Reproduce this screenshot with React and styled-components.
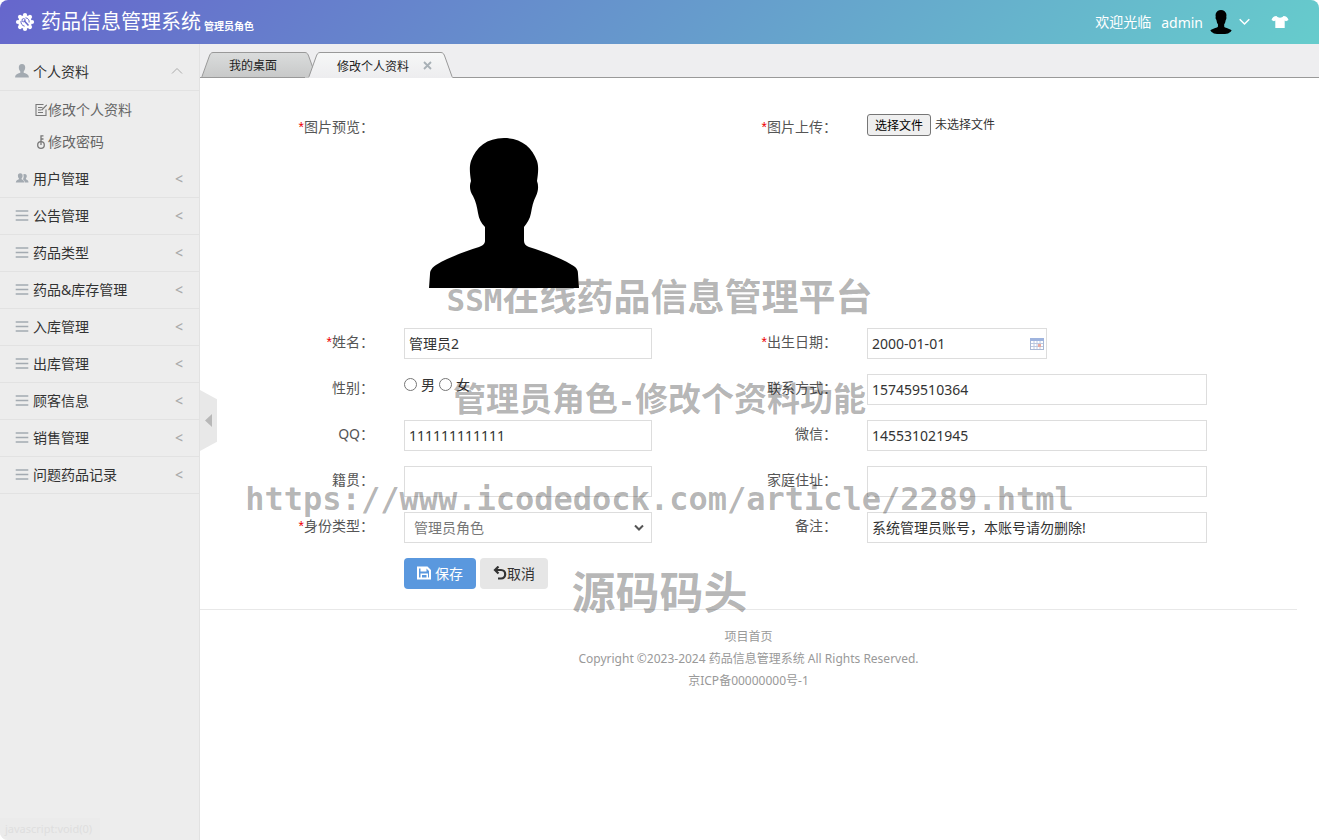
import { useRef, useState } from "react"
import styled, { createGlobalStyle } from "styled-components"

const GlobalStyle = createGlobalStyle`
    * {
        box-sizing: border-box;
    }
    body {
        margin: 0;
        background: #fff;
        color: #333;
        font-family: "Noto Sans", "Noto Sans CJK SC", sans-serif;
        font-size: 14px;
        line-height: 20px;
    }
    button, input, select {
        font-family: inherit;
    }
    a {
        color: inherit;
        text-decoration: none;
    }
    `
const Page = styled.div`
    position: relative;
    display: flex;
    flex-direction: column;
    min-height: 100vh;
    border-radius: 8px;
    overflow: hidden;
    `
const TopBar = styled.header`
    display: flex;
    align-items: center;
    justify-content: space-between;
    height: 44px;
    padding: 0 30px 0 15px;
    color: #fff;
    background: linear-gradient(135deg, #66c, #6cc);
    `
const Brand = styled.a`
    display: flex;
    align-items: center;
    `
const Title = styled.span`
    margin: 0 3px 0 6px;
    font-size: 20px;
    line-height: 28px;
    `
const Role = styled.span`
    padding-top: 8px;
    font-size: 10px;
    font-weight: 700;
    line-height: 14px;
    `
const UserArea = styled.div`
    display: flex;
    align-items: center;
    `
const Welcome = styled.span`
    margin-right: 10px;
    `
const UserButton = styled.button`
    display: flex;
    align-items: center;
    gap: 6px;
    padding: 0;
    border: none;
    background: none;
    color: inherit;
    font-size: 14px;
    cursor: pointer;
    `
const SkinButton = styled.button`
    display: flex;
    margin-left: 21px;
    padding: 0;
    border: none;
    background: none;
    color: inherit;
    cursor: pointer;
    `
const AvatarImage = styled.svg`
    display: block;
    width: ${props => props.$size}px;
    height: ${props => props.$size}px;
    border-radius: ${props => props.$round ? "8px" : "0"};
    `
const Body = styled.div`
    display: flex;
    flex: 1;
    `
const Sidebar = styled.nav`
    position: relative;
    flex: 0 0 200px;
    padding-top: 10px;
    border-right: 1px solid #e2e2e2;
    background: #ededed;
    `
const MenuItem = styled.button`
    display: flex;
    align-items: center;
    gap: 4px;
    width: 100%;
    height: 37px;
    padding: 0 16px 2px 15px;
    border: none;
    border-bottom: 1px solid #e2e2e2;
    background: none;
    color: #333;
    font-size: 14px;
    text-align: left;
    cursor: pointer;
    `
const MenuText = styled.span`
    flex: 1;
    `
const MenuArrow = styled.span`
    color: #aaa;
    font-weight: 500;
    `
const SubMenu = styled.div`
    padding: 3px 0;
    `
const SubItem = styled.a`
    display: flex;
    align-items: center;
    height: 32px;
    padding-left: 35px;
    color: #666;
    `
const Collapse = styled.button`
    position: absolute;
    top: 346px;
    left: 200px;
    display: flex;
    align-items: center;
    width: 17px;
    height: 61px;
    padding: 0 0 0 5px;
    border: none;
    background: #e8e8e8;
    clip-path: polygon(0 0, 100% 15%, 100% 85%, 0 100%);
    cursor: pointer;
    `
const StatusText = styled.div`
    position: absolute;
    left: 0;
    bottom: 0;
    width: 100px;
    padding: 0 5px;
    background: #ebebeb;
    color: #dedede;
    font-size: 11px;
    line-height: 22px;
    white-space: nowrap;
    `
const Main = styled.main`
    flex: 1;
    min-width: 0;
    background: #fff;
    `
const TabBar = styled.div`
    display: flex;
    align-items: flex-end;
    height: 34px;
    background: #eeeef0;
    box-shadow: inset 0 -1px 0 #999;
    `
const Tab = styled.div`
    position: relative;
    z-index: ${props => props.$active ? 1 : 0};
    display: flex;
    height: 26px;
    margin-left: ${props => props.$active ? "-9px" : "1px"};
    `
const TabEdge = styled.svg`
    display: block;
    width: 12px;
    height: 26px;
    `
const TabLink = styled.button`
    display: flex;
    align-items: center;
    gap: 14px;
    padding: ${props => props.$active ? "0 9px 0 17px" : "0 28px 0 16px"};
    border: none;
    border-top: 1px solid #999;
    border-bottom: ${props => props.$active ? "none" : "1px solid #999"};
    background: ${props => props.$active
        ? "linear-gradient(#f6f7f7, #ededef)"
        : "linear-gradient(#dadcdc, #c8c9c9)"};
    color: #222;
    font-size: 12px;
    cursor: pointer;
    `
const Form = styled.form`
    display: grid;
    grid-template-columns: 174fr 248fr 155fr 340fr;
    column-gap: 30px;
    row-gap: 15px;
    align-items: start;
    padding: 35px 10% 20px 0;
    `
const Label = styled.label`
    color: #555;
    line-height: 28px;
    text-align: right;
    white-space: nowrap;
    `
const Required = styled.span`
    color: #e00;
    font-family: "Liberation Sans", sans-serif;
    `
const Preview = styled.div`
    height: 200px;
    padding: 25px;
    `
const Field = styled.div`
    position: relative;
    width: ${props => props.$width || "100%"};
    `
const TextInput = styled.input`
    display: block;
    width: 100%;
    height: 31px;
    padding: 0 4px 1px;
    border: 1px solid #ddd;
    background: #fff;
    color: #333;
    font-size: 14px;
    `
const Select = styled.select`
    display: block;
    width: 100%;
    height: 31px;
    padding: 0 30px 1px 9px;
    border: 1px solid #ddd;
    border-radius: 0;
    background: #fff;
    color: #777;
    font-size: 14px;
    appearance: none;
    `
const FieldIcon = styled.svg`
    position: absolute;
    top: 50%;
    right: ${props => props.$right}px;
    transform: translateY(-50%);
    pointer-events: none;
    `
const FileRow = styled.div`
    display: flex;
    align-items: center;
    gap: 4px;
    font-size: 12px;
    line-height: 22px;
    `
const FileButton = styled.button`
    height: 22px;
    padding: 1px 7px 0;
    border: 1px solid #767676;
    border-radius: 3px;
    background: #efefef;
    color: #000;
    font-size: 12px;
    line-height: 20px;
    `
const FileName = styled.span`
    padding-top: 1px;
    `
const HiddenFile = styled.input`
    display: none;
    `
const RadioRow = styled.div`
    display: flex;
    align-items: center;
    gap: 4px;
    height: 21px;
    `
const Radio = styled.input`
    width: 13px;
    height: 13px;
    margin: 0;
    `
const Actions = styled.div`
    grid-column: 2 / -1;
    display: flex;
    gap: 4px;
    `
const Button = styled.button`
    display: flex;
    align-items: center;
    gap: ${props => props.$primary ? "4px" : "0"};
    height: 31px;
    padding: 0 13px 1px;
    border: none;
    border-radius: 4px;
    background: ${props => props.$primary ? "#5a98de" : "#e6e6e6"};
    color: ${props => props.$primary ? "#fff" : "#333"};
    font-size: 14px;
    cursor: pointer;
    `
const Footer = styled.footer`
    margin-right: 22px;
    padding-top: 16px;
    border-top: 1px solid #e8e8e8;
    color: #999;
    font-size: 12px;
    line-height: 22px;
    text-align: center;
    `
const FooterLine = styled.div`
    `
const Watermark = styled.div`
    position: absolute;
    inset: 244px 0 auto 0;
    display: flex;
    flex-direction: column;
    align-items: center;
    color: rgba(0, 0, 0, .3);
    font-family: "Noto Sans CJK SC", sans-serif;
    font-weight: 700;
    white-space: nowrap;
    pointer-events: none;
    `
const Mark = styled.div`
    height: ${props => props.$line}px;
    font-size: ${props => props.$size}px;
    line-height: ${props => props.$line}px;
    `
const Mono = styled.span`
    font-family: "DejaVu Sans Mono", monospace;
    font-size: ${props => props.$size}px;
    line-height: 0;
    `

const menus = [
    { title: "用户管理", icon: "users" },
    { title: "公告管理" },
    { title: "药品类型" },
    { title: "药品&库存管理" },
    { title: "入库管理" },
    { title: "出库管理" },
    { title: "顾客信息" },
    { title: "销售管理" },
    { title: "问题药品记录" },
]

const teeth = [0, 45, 90, 135, 180, 225, 270, 315]

function Avatar({ size, round }) {
    return (
        <AvatarImage viewBox="0 0 150 150" $size={size} $round={round}>
            <path d="M75 0C92 0 103 9 108 23C110 29 109 36 108 43C110 48 109 54 107 58C104 64 103 69 102 75C101 81 98 85 95 89V103C95 106 97 108 100 109C115 114 130 119 143 127C148 130 149 132 149 136L150 150H0L1 136C1 132 3 130 7 127C20 119 35 114 50 109C53 108 56 106 56 103V89C52 85 50 81 49 75C48 69 47 64 44 58C41 54 40 48 42 43C41 36 40 29 42 23C47 9 58 0 75 0Z" />
        </AvatarImage>
    )
}

function GearIcon() {
    return (
        <svg width="20" height="20" viewBox="0 0 20 20" fill="#fff">
            {teeth.map(angle => (
                <circle key={angle} cx="10" cy="3" r="2.1" transform={`rotate(${angle} 10 10)`} />
            ))}
            <circle cx="10" cy="10" r="6.8" />
            <path d="M10.500 5.800C13 6 14.600 8.200 14.100 10.500M6 9C5.600 11.500 7.200 13.800 9.600 14.200" fill="none" stroke="#6668cc" strokeWidth="1" />
            <path d="M9 8.500L13.500 13.500" stroke="#6668cc" strokeWidth="1.6" />
            <circle cx="8.6" cy="8.2" r="1.6" fill="none" stroke="#6668cc" strokeWidth="1" />
        </svg>
    )
}

function MenuIcon({ type }) {
    if (type === "user") {
        return (
            <svg width="14" height="14" viewBox="0 0 14 14" fill="#a3aab1">
                <path d="M7 0C9.200 0 10.300 1.500 10.200 3.700C10.100 5.600 9.300 6.600 8.700 7.400V8.800C10.600 9.600 13.800 10 13.900 13.500H.1C.2 10 3.400 9.600 5.300 8.800V7.400C4.700 6.600 3.900 5.600 3.800 3.700C3.700 1.500 4.800 0 7 0Z" />
            </svg>
        )
    }
    if (type === "users") {
        return (
            <svg width="14" height="14" viewBox="0 0 14 14" fill="#a3aab1">
                <path d="M9.700 3C11.200 3 11.900 4 11.800 5.300C11.700 6.500 11.300 7 10.900 7.500V8.300C12.100 8.800 13.500 9.200 13.500 11.500H9.800C9.600 9.400 8.700 8.800 7.900 8.400C8.900 6.900 8.900 4.700 8.200 3.600C8.600 3.200 9.100 3 9.700 3Z" />
                <path d="M5.300 2.300C6.900 2.300 7.700 3.400 7.600 4.900C7.500 6.300 7 6.800 6.600 7.300V8.200C7.900 8.800 9.100 9.200 9.200 11.500H.8C.9 9.200 2.600 8.800 3.900 8.200V7.300C3.500 6.800 3 6.300 2.900 4.900C2.800 3.400 3.700 2.300 5.300 2.300Z" />
            </svg>
        )
    }
    return (
        <svg width="14" height="14" viewBox="0 0 14 14" stroke="#a3aab1" strokeWidth="1.4">
            <path d="M.7 3H13.300M.7 7.500H13.300M.7 12H13.300" />
        </svg>
    )
}

function TabItem({ title, active }) {
    const id = active ? "tab-on" : "tab-off"
    return (
        <Tab $active={active}>
            <TabEdge viewBox="0 0 12 26">
                <defs>
                    <linearGradient id={id} x1="0" y1="0" x2="0" y2="26" gradientUnits="userSpaceOnUse">
                        <stop offset="0" stopColor={active ? "#f6f7f7" : "#dadcdc"} />
                        <stop offset="1" stopColor={active ? "#ededef" : "#c8c9c9"} />
                    </linearGradient>
                </defs>
                <path d="M0 26L1 25L8 5C9 2 10 .5 12 .5V26Z" fill={`url(#${id})`} />
                <path d="M0 25.500L1 24.500L8 5C9 2 10 .5 12 .5" fill="none" stroke="#999" />
                {!active && <path d="M0 25.500H12" stroke="#999" />}
            </TabEdge>
            <TabLink type="button" $active={active}>
                {title}
                {active &&
                    <svg width="9" height="9" viewBox="0 0 9 9" stroke="#a8b0b6" strokeWidth="1.8">
                        <path d="M1 1L8 8M8 1L1 8" />
                    </svg>
                }
            </TabLink>
            <TabEdge viewBox="0 0 12 26">
                <path d="M12 26L11 25L4 5C3 2 2 .5 0 .5V26Z" fill={`url(#${id})`} />
                <path d="M12 25.500L11 24.500L4 5C3 2 2 .5 0 .5" fill="none" stroke="#999" />
            </TabEdge>
        </Tab>
    )
}

function InputField({ id, label, value, required }) {
    return (
        <>
            <Label htmlFor={id}>{required && <Required>*</Required>}{label}：</Label>
            <Field>
                <TextInput id={id} type="text" defaultValue={value} />
            </Field>
        </>
    )
}

function ProfileForm() {

    const fileRef = useRef(null)
    const [fileName, setFileName] = useState("未选择文件")

    return (
        <Form onSubmit={e => e.preventDefault()}>
            <Label as="span"><Required>*</Required>图片预览：</Label>
            <Preview>
                <Avatar size={150} />
            </Preview>
            <Label htmlFor="photo"><Required>*</Required>图片上传：</Label>
            <FileRow>
                <HiddenFile
                    id="photo"
                    type="file"
                    ref={fileRef}
                    onChange={e => setFileName(e.target.files[0]?.name || "未选择文件")}
                />
                <FileButton type="button" onClick={() => fileRef.current.click()}>选择文件</FileButton>
                <FileName>{fileName}</FileName>
            </FileRow>

            <InputField id="name" label="姓名" value="管理员2" required />
            <Label htmlFor="birthday"><Required>*</Required>出生日期：</Label>
            <Field $width="180px">
                <TextInput id="birthday" type="text" defaultValue="2000-01-01" />
                <FieldIcon $right={3} width="14" height="12" viewBox="0 0 14 12">
                    <rect x="0.500" y="0.500" width="13" height="11" fill="#fff" stroke="#a9b8d4" />
                    <rect width="14" height="3" fill="#9fb4de" />
                    <path d="M1 5.500H13M1 8.500H13M4 3V11M7 3V11M10 3V11" stroke="#bcc8e0" />
                    <rect x="8" y="6" width="3" height="3" fill="#e8aaa0" />
                </FieldIcon>
            </Field>

            <Label as="span">性别：</Label>
            <RadioRow>
                <Radio id="male" type="radio" name="sex" />
                <label htmlFor="male">男</label>
                <Radio id="female" type="radio" name="sex" />
                <label htmlFor="female">女</label>
            </RadioRow>
            <InputField id="phone" label="联系方式" value="157459510364" />

            <InputField id="qq" label="QQ" value="111111111111" />
            <InputField id="wechat" label="微信" value="145531021945" />

            <InputField id="native" label="籍贯" value="" />
            <InputField id="address" label="家庭住址" value="" />

            <Label htmlFor="role"><Required>*</Required>身份类型：</Label>
            <Field>
                <Select id="role">
                    <option>管理员角色</option>
                </Select>
                <FieldIcon $right={8} width="10" height="7" viewBox="0 0 10 7" fill="none" stroke="#555" strokeWidth="2">
                    <path d="M1 1L5 5L9 1" />
                </FieldIcon>
            </Field>
            <InputField id="remark" label="备注" value="系统管理员账号，本账号请勿删除!" />

            <Actions>
                <Button type="submit" $primary>
                    <svg width="14" height="14" viewBox="0 0 14 14" fill="#fff" fillRule="evenodd">
                        <path d="M0 .5H10.500L14 4V13.500H0ZM2 2.500V11.500H3.500V7.500H11V11.500H12V5L9.500 2.500V5.500H3.500V2.500ZM5 9V11.500H9.500V9Z" />
                    </svg>
                    保存
                </Button>
                <Button type="button">
                    <svg width="14" height="14" viewBox="0 0 14 14" fill="none" stroke="#333" strokeWidth="2.2">
                        <path d="M2.500 4H8C13.600 4 13.600 12.500 8 12.500H5" />
                        <path d="M5.500 .5L2 4L5.500 7.500" />
                    </svg>
                    取消
                </Button>
            </Actions>
        </Form>
    )
}

function App() {
    return (
        <>
            <GlobalStyle />
            <Page>
                <TopBar>
                    <Brand href="#">
                        <GearIcon />
                        <Title>药品信息管理系统</Title>
                        <Role>管理员角色</Role>
                    </Brand>
                    <UserArea>
                        <Welcome>欢迎光临</Welcome>
                        <UserButton type="button">
                            admin
                            <Avatar size={24} round />
                            <svg width="11" height="8" viewBox="0 0 11 8" fill="none" stroke="#fff" strokeWidth="1.5">
                                <path d="M.7 1.200L5.500 6L10.300 1.200" />
                            </svg>
                        </UserButton>
                        <SkinButton type="button" aria-label="换肤">
                            <svg width="18" height="12" viewBox="0 0 18 12" fill="#fff">
                                <path d="M5.500 0C7 2.200 11 2.200 12.500 0C15 .3 16.700 1 17.500 4L15 5.300L13.700 4.500V12H4.300V4.500L3 5.300L.5 4C1.300 1 3 .3 5.500 0Z" />
                            </svg>
                        </SkinButton>
                    </UserArea>
                </TopBar>

                <Body>
                    <Sidebar>
                        <MenuItem type="button">
                            <MenuIcon type="user" />
                            <MenuText>个人资料</MenuText>
                            <svg width="12" height="8" viewBox="0 0 12 8" fill="none" stroke="#aaa">
                                <path d="M1 6.500L6 1.500L11 6.500" />
                            </svg>
                        </MenuItem>
                        <SubMenu>
                            <SubItem href="#">
                                <svg width="13" height="14" viewBox="0 0 13 14" fill="none" stroke="#777" strokeWidth="1.1">
                                    <path d="M11 6.500V12.500H1V1.500H8.500M3 4.500H7.500M3 7H6.500M3 9.500H8M6.800 7L11.800 1.800" />
                                </svg>
                                修改个人资料
                            </SubItem>
                            <SubItem href="#">
                                <svg width="13" height="14" viewBox="0 0 13 14" fill="none" stroke="#777" strokeWidth="1.3">
                                    <circle cx="6" cy="10" r="3.3" />
                                    <path d="M6 10V.8H8.500M6 4H8.500" />
                                </svg>
                                修改密码
                            </SubItem>
                        </SubMenu>
                        {menus.map(menu => (
                            <MenuItem key={menu.title} type="button">
                                <MenuIcon type={menu.icon} />
                                <MenuText>{menu.title}</MenuText>
                                <MenuArrow>&lt;</MenuArrow>
                            </MenuItem>
                        ))}
                        <Collapse type="button" aria-label="收起菜单">
                            <svg width="7" height="13" viewBox="0 0 7 13" fill="#b8b8b8">
                                <path d="M7 0V13L0 6.500Z" />
                            </svg>
                        </Collapse>
                        <StatusText>javascript:void(0)</StatusText>
                    </Sidebar>

                    <Main>
                        <TabBar>
                            <TabItem title="我的桌面" />
                            <TabItem title="修改个人资料" active />
                        </TabBar>
                        <ProfileForm />
                        <Footer>
                            <FooterLine><a href="#">项目首页</a></FooterLine>
                            <FooterLine>Copyright ©2023-2024 药品信息管理系统 All Rights Reserved.</FooterLine>
                            <FooterLine>京ICP备00000000号-1</FooterLine>
                        </Footer>
                    </Main>
                </Body>

                <Watermark>
                    <Mark $size={37} $line={102}><Mono $size={31}>SSM</Mono>在线药品信息管理平台</Mark>
                    <Mark $size={33} $line={102}>管理员角色<Mono $size={28}>-</Mono>修改个资料功能</Mark>
                    <Mark $size={32} $line={96}><Mono $size={32}>https://www.icodedock.com/article/2289.html</Mono></Mark>
                    <Mark $size={44} $line={92}>源码码头</Mark>
                </Watermark>
            </Page>
        </>
    )
}

export default App
